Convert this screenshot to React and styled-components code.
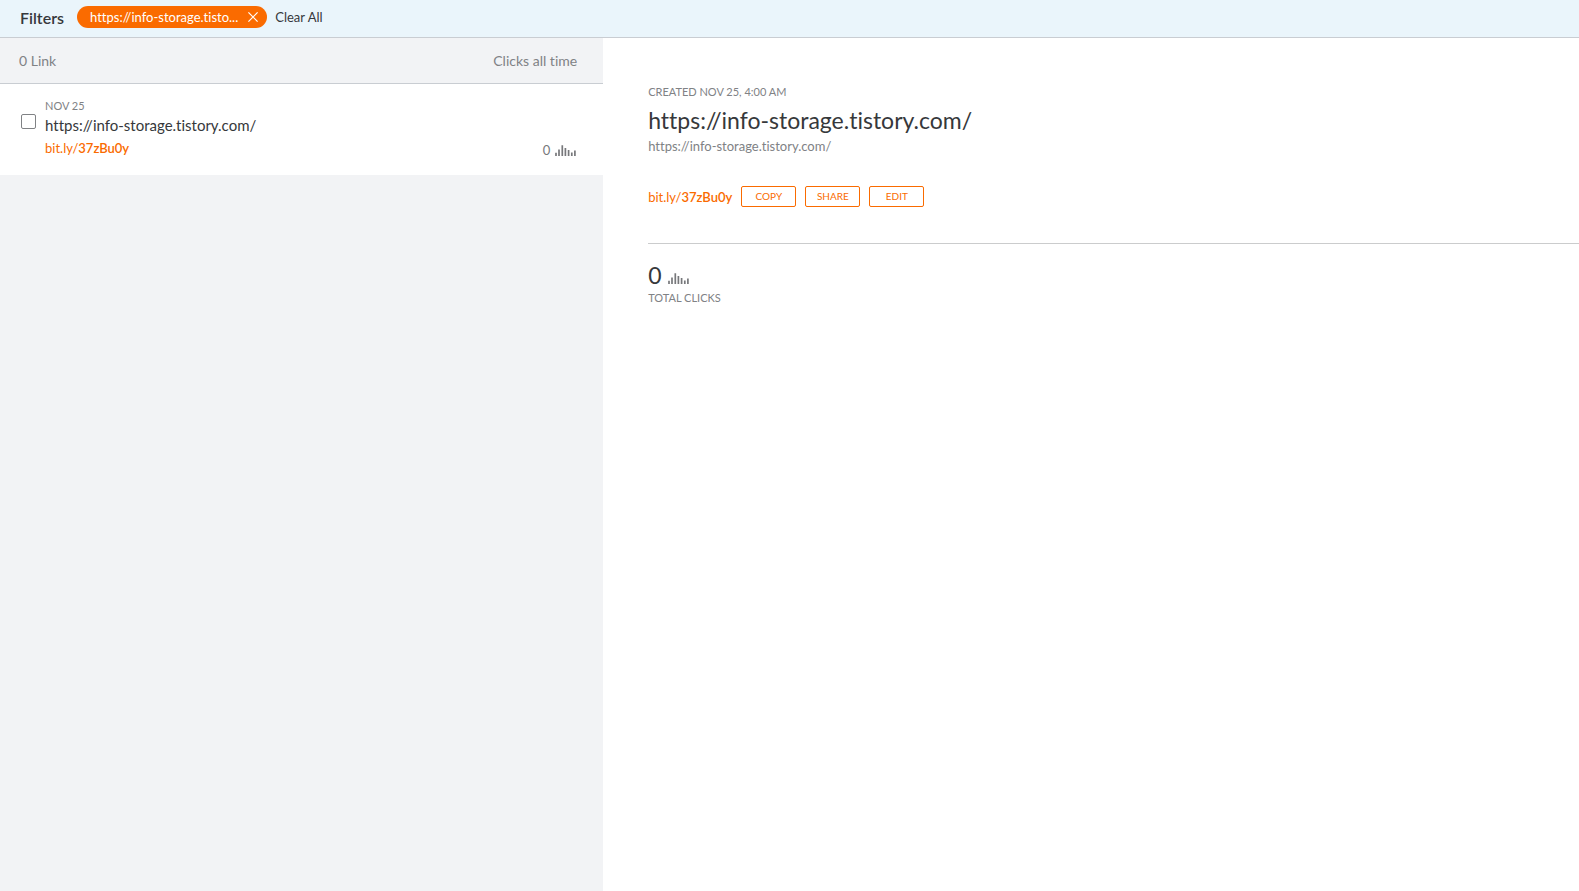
import styled, { createGlobalStyle } from "styled-components";

const LONG_URL = "https://info-storage.tistory.com/";

export default function App() {
  return (
    <>
      <GlobalStyle />
      <Page>
        <FilterBar>
          <FilterTitle>Filters</FilterTitle>
          <FilterChip type="button" aria-label={`Remove filter ${LONG_URL}`}>
            <ChipText>https://info-storage.tisto...</ChipText>
            <CloseIcon />
          </FilterChip>
          <ClearButton type="button">Clear All</ClearButton>
        </FilterBar>
        <Content>
          <LinkList>
            <ListHeader>
              <span>0 Link</span>
              <span>Clicks all time</span>
            </ListHeader>
            <LinkItem>
              <Checkbox type="checkbox" id="link-37zBu0y" />
              <LinkInfo>
                <Caption>NOV 25</Caption>
                <ItemTitle htmlFor="link-37zBu0y">{LONG_URL}</ItemTitle>
                <ItemBottom>
                  <BitlyLink />
                  <ClickCount>
                    0 <BarsIcon />
                  </ClickCount>
                </ItemBottom>
              </LinkInfo>
            </LinkItem>
          </LinkList>
          <Detail>
            <Caption>CREATED NOV 25, 4:00 AM</Caption>
            <DetailTitle>{LONG_URL}</DetailTitle>
            <LongUrl href={LONG_URL}>{LONG_URL}</LongUrl>
            <Actions>
              <BitlyLink />
              <ActionButton type="button">COPY</ActionButton>
              <ActionButton type="button">SHARE</ActionButton>
              <ActionButton type="button">EDIT</ActionButton>
            </Actions>
            <Total>
              0 <BarsIcon />
            </Total>
            <Caption>TOTAL CLICKS</Caption>
          </Detail>
        </Content>
      </Page>
    </>
  );
}

function BitlyLink() {
  return (
    <ShortUrl href="https://bit.ly/37zBu0y">
      bit.ly/<b>37zBu0y</b>
    </ShortUrl>
  );
}

function CloseIcon() {
  return (
    <svg width="10" height="10" viewBox="0 0 10 10" stroke="#fff" strokeWidth="1.2" aria-hidden="true">
      <path d="M0.4 0.4 9.6 9.6M9.6 0.4 0.4 9.6" />
    </svg>
  );
}

function BarsIcon() {
  return (
    <svg width="21" height="11" viewBox="0 0 21 11" stroke="#77787b" strokeWidth="1.7" aria-hidden="true">
      <path d="M1 11V7.7M4 11V4.4M7.3 11V0.3M10.4 11V3M13.6 11V5M16.8 11V7.5M19.9 11V5.4" />
    </svg>
  );
}

const GlobalStyle = createGlobalStyle`
  * {
    box-sizing: border-box;
  }
  body {
    margin: 0;
    font-family: Lato, "Liberation Sans", sans-serif;
    font-variant-ligatures: none;
    color: #36383b;
    background-color: #fff;
  }
  button {
    font-family: inherit;
    font-variant-ligatures: none;
    cursor: pointer;
  }
`;

const Page = styled.div`
  display: flex;
  flex-direction: column;
  min-height: 100vh;
`;
const FilterBar = styled.header`
  display: flex;
  align-items: flex-start;
  padding: 6px 20px 9px;
  background-color: #eaf5fb;
  border-bottom: 1px solid #c9cdd2;
`;
const FilterTitle = styled.h1`
  margin: 2px 13px 0 0;
  font-size: 16px;
  line-height: 20px;
  font-weight: 600;
`;
const FilterChip = styled.button`
  display: flex;
  align-items: center;
  gap: 10px;
  height: 22px;
  padding: 0 9px 0 13px;
  border: none;
  border-radius: 11px;
  color: #fff;
  background-color: #fa6b00;
`;
const ChipText = styled.span`
  font-size: 13px;
  line-height: 20px;
`;
const ClearButton = styled.button`
  margin-left: 8px;
  padding: 1px 0 0;
  border: none;
  background: none;
  color: inherit;
  font-size: 13px;
  line-height: 20px;
`;

const Content = styled.main`
  display: flex;
  flex: 1;
`;
const LinkList = styled.section`
  flex: 0 0 38.2%;
  background-color: #f2f3f5;
`;
const ListHeader = styled.div`
  display: flex;
  justify-content: space-between;
  padding: 13px 26px 12px 19px;
  border-bottom: 1px solid #c9cdd2;
  color: #808285;
  font-size: 14px;
  line-height: 20px;
`;
const LinkItem = styled.div`
  display: flex;
  align-items: flex-start;
  gap: 9px;
  padding: 14px 27px 15px 21px;
  background-color: #fff;
`;
const Checkbox = styled.input`
  appearance: none;
  width: 15px;
  height: 15px;
  margin: 16px 0 0;
  border: 1px solid #808285;
  border-radius: 2px;
  background-color: #fff;

  &:checked {
    background-color: #fa6b00;
  }
`;
const LinkInfo = styled.div`
  flex: 1;
`;
const Caption = styled.div`
  color: #808285;
  font-size: 11px;
  line-height: 16px;
`;
const ItemTitle = styled.label`
  display: block;
  font-size: 15px;
  line-height: 22px;
`;
const ItemBottom = styled.div`
  display: flex;
  justify-content: space-between;
  padding-top: 2px;
`;
const ClickCount = styled.div`
  display: flex;
  align-items: center;
  gap: 5px;
  padding-top: 2px;
  color: #77787b;
  font-size: 13px;
  line-height: 20px;
`;
const ShortUrl = styled.a`
  color: #fa6b00;
  font-size: 13px;
  line-height: 20px;
  text-decoration: none;

  b {
    font-weight: 600;
  }
`;

const Detail = styled.section`
  flex: 1;
  padding: 46px 0 0 45px;
`;
const DetailTitle = styled.h2`
  margin: 4px 0 0;
  font-size: 23px;
  line-height: 32px;
  font-weight: 400;
`;
const LongUrl = styled.a`
  display: block;
  color: #808285;
  font-size: 13px;
  line-height: 20px;
  text-decoration: none;
`;
const Actions = styled.div`
  display: flex;
  align-items: center;
  gap: 9px;
  padding: 30px 0 36px;
  border-bottom: 1px solid #cbcccd;
`;
const ActionButton = styled.button`
  width: 55px;
  height: 21px;
  padding: 0;
  border: 1px solid #fa6b00;
  border-radius: 2px;
  background-color: #fff;
  color: #fa6b00;
  font-size: 10px;
  line-height: 19px;
`;
const Total = styled.div`
  display: flex;
  align-items: baseline;
  gap: 6px;
  padding-top: 16px;
  font-size: 23px;
  line-height: 30px;
`;
